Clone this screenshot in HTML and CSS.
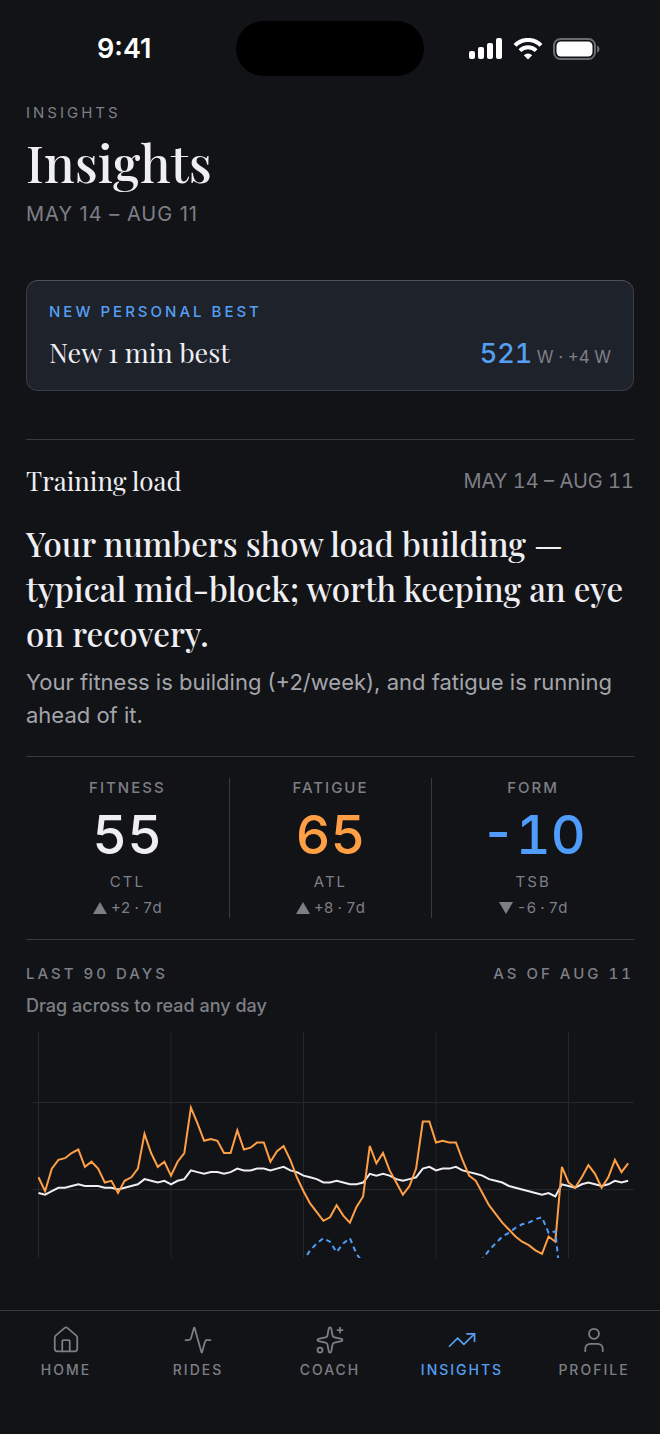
FILE: index.html
```
<!DOCTYPE html>
<html lang="en">
<head>
  <meta charset="UTF-8">
  <meta name="viewport" content="width=device-width, initial-scale=1.0">
  <title>Insights</title>
  <link rel="stylesheet" href="styles.css">
</head>
<body>
  <div class="status-bar">
    <span class="time">9:41</span>
    <span class="island"></span>
    <span class="status-icons">
      <svg width="34" height="22" viewBox="0 0 34 22" fill="#fff">
        <rect x="0" y="13" width="6" height="8" rx="2"/>
        <rect x="9" y="9" width="6" height="12" rx="2"/>
        <rect x="18" y="5" width="6" height="16" rx="2"/>
        <rect x="27" y="0" width="6" height="21" rx="2"/>
      </svg>
      <svg width="30" height="22" viewBox="0 0 30 22" fill="none" stroke="#fff" stroke-width="4">
        <path d="M2 7.3a18.4 18.4 0 0 1 26 0"/>
        <path d="M6.9 12.7a11.5 11.5 0 0 1 16.2 0"/>
        <path d="M15 21.6l-4.2-4.3a6 6 0 0 1 8.4 0z" fill="#fff" stroke="none"/>
      </svg>
      <svg width="47" height="22" viewBox="0 0 47 22">
        <rect x="1" y="1" width="41" height="20" rx="6.5" fill="none" stroke="#6b6c70" stroke-width="2"/>
        <rect x="3.5" y="3.5" width="36" height="15" rx="4.5" fill="#fff"/>
        <path d="M44 7.5c3.4 1 3.4 6 0 7z" fill="#6b6c70"/>
      </svg>
    </span>
  </div>

  <main>
    <header class="page-header">
      <div class="label wide">Insights</div>
      <h1>Insights</h1>
      <div class="date-range">MAY 14 – AUG 11</div>
    </header>

    <section class="best-card">
      <div class="label wide accent">New personal best</div>
      <div class="row">
        <h2>New 1 min best</h2>
        <div class="best-value"><strong>521</strong> W · +4 W</div>
      </div>
    </section>

    <section class="training">
      <div class="row training-head">
        <h2>Training load</h2>
        <span class="period">MAY 14 – AUG 11</span>
      </div>
      <p class="headline">Your numbers show load building — typical mid-block; worth keeping an eye on recovery.</p>
      <p class="summary">Your fitness is building (+2/week), and fatigue is running ahead of it.</p>
    </section>

    <section class="stats">
      <div class="stat">
        <div class="label strong">Fitness</div>
        <div class="number">55</div>
        <div class="label">CTL</div>
        <div class="delta"><svg width="14" height="12" viewBox="0 0 14 12"><path d="M7 0l7 12H0z"/></svg>+2 · 7d</div>
      </div>
      <div class="stat">
        <div class="label strong">Fatigue</div>
        <div class="number fatigue">65</div>
        <div class="label">ATL</div>
        <div class="delta"><svg width="14" height="12" viewBox="0 0 14 12"><path d="M7 0l7 12H0z"/></svg>+8 · 7d</div>
      </div>
      <div class="stat">
        <div class="label strong">Form</div>
        <div class="number form">-10</div>
        <div class="label">TSB</div>
        <div class="delta"><svg width="14" height="12" viewBox="0 0 14 12"><path d="M0 0h14L7 12z"/></svg>-6 · 7d</div>
      </div>
    </section>

    <section class="history">
      <div class="row">
        <span class="label wide strong">Last 90 days</span>
        <span class="label wide strong">As of Aug 11</span>
      </div>
      <p class="hint">Drag across to read any day</p>
      <svg class="chart" viewBox="0 0 608 226">
        <path class="grid" d="M12.5 0v226M145 0v226M277.5 0v226M410 0v226M542.5 0v226M6 70.5h602M6 157.5h602"/>
        <polyline class="line ctl" id="ctl"/>
        <polyline class="line atl" id="atl"/>
        <polyline class="line tsb" id="tsb"/>
      </svg>
    </section>
  </main>

  <nav class="tab-bar">
    <a href="#home">
      <svg class="icon" viewBox="0 0 24 24"><path d="M15 21v-8a1 1 0 0 0-1-1h-4a1 1 0 0 0-1 1v8"/><path d="M3 10a2 2 0 0 1 .709-1.528l7-5.999a2 2 0 0 1 2.582 0l7 5.999A2 2 0 0 1 21 10v9a2 2 0 0 1-2 2H5a2 2 0 0 1-2-2z"/></svg>
      Home
    </a>
    <a href="#rides">
      <svg class="icon" viewBox="0 0 24 24"><path d="M22 12h-2.48a2 2 0 0 0-1.93 1.46l-2.35 8.36a.25.25 0 0 1-.48 0L9.24 2.18a.25.25 0 0 0-.48 0l-2.35 8.36A2 2 0 0 1 4.49 12H2"/></svg>
      Rides
    </a>
    <a href="#coach">
      <svg class="icon" viewBox="0 0 24 24"><path d="M11.017 2.814a1 1 0 0 1 1.966 0l1.051 5.558a2 2 0 0 0 1.594 1.594l5.558 1.051a1 1 0 0 1 0 1.966l-5.558 1.051a2 2 0 0 0-1.594 1.594l-1.051 5.558a1 1 0 0 1-1.966 0l-1.051-5.558a2 2 0 0 0-1.594-1.594l-5.558-1.051a1 1 0 0 1 0-1.966l5.558-1.051a2 2 0 0 0 1.594-1.594z"/><path d="M20 2v4M22 4h-4"/><circle cx="4" cy="20" r="2"/></svg>
      Coach
    </a>
    <a href="#insights" class="active">
      <svg class="icon" viewBox="0 0 24 24"><path d="M16 7h6v6"/><path d="m22 7-8.5 8.5-5-5L2 17"/></svg>
      Insights
    </a>
    <a href="#profile">
      <svg class="icon" viewBox="0 0 24 24"><path d="M19 21v-2a4 4 0 0 0-4-4H9a4 4 0 0 0-4 4v2"/><circle cx="12" cy="7" r="4"/></svg>
      Profile
    </a>
  </nav>

  <script>
    // One value per day, oldest first
    const ctl = [
      48, 47, 49, 51, 51, 52, 53, 52, 52, 52, 51, 51, 50, 51, 52, 53, 56, 55, 54, 55,
      53, 55, 56, 61, 60, 59, 60, 60, 59, 60, 62, 61, 61, 62, 62, 61, 62, 63, 61, 60,
      58, 57, 56, 54, 54, 55, 54, 53, 53, 54, 59, 58, 59, 58, 56, 55, 56, 57, 62, 63,
      61, 62, 62, 63, 61, 60, 59, 58, 56, 55, 54, 52, 51, 50, 49, 48, 47, 48, 46, 53,
      52, 51, 53, 54, 53, 52, 53, 55, 54, 55
    ];
    const atl = [
      57, 49, 62, 67, 68, 71, 73, 63, 66, 62, 54, 55, 48, 55, 57, 62, 82, 71, 63, 66,
      58, 66, 71, 97, 88, 78, 79, 78, 71, 71, 84, 73, 74, 77, 77, 66, 72, 75, 67, 57,
      49, 42, 37, 32, 34, 41, 35, 31, 40, 46, 75, 65, 71, 61, 54, 47, 52, 62, 89, 89,
      77, 78, 77, 77, 67, 58, 55, 48, 41, 36, 31, 27, 23, 20, 18, 15, 13, 23, 20, 63,
      54, 51, 57, 64, 59, 51, 57, 67, 60, 65
    ];
    const tsb = ctl.map((value, i) => value - atl[i]);

    function drawLine(id, values) {
      const points = values.map((value, i) => {
        const x = 12.5 + i * 6.625;
        const y = 157.5 - (value - 50) * 1.74;
        return x.toFixed(1) + ',' + y.toFixed(1);
      });
      document.getElementById(id).setAttribute('points', points.join(' '));
    }

    drawLine('ctl', ctl);
    drawLine('atl', atl);
    drawLine('tsb', tsb);
  </script>
</body>
</html>
```
FILE: styles.css
```
* {
  box-sizing: border-box;
}
body {
  margin: 0;
  min-height: 100vh;
  display: flex;
  flex-direction: column;
  background-color: #121317;
  color: #eeeef3;
  font-family: Inter, "Liberation Sans", sans-serif;
  font-size: 15px;
  line-height: 20px;
}
h1, h2, p {
  margin: 0;
}
h1, h2, .headline {
  font-family: "Playfair Display", "Liberation Serif", serif;
  font-weight: 500;
}
h1 {
  margin-top: 7px;
  font-size: 51px;
  line-height: 64px;
}
h2 {
  font-size: 26px;
  font-weight: 400;
  line-height: 32px;
}
.status-bar {
  display: grid;
  grid-template-columns: 1fr 188px 1fr;
  align-items: center;
  padding: 21px 0;
}
.time {
  padding-left: 97px;
  color: #fff;
  font-size: 27px;
  font-weight: 600;
}
.island {
  height: 55px;
  border-radius: 28px;
  background-color: #000;
}
.status-icons {
  display: flex;
  justify-content: flex-end;
  gap: 10px;
  padding-right: 60px;
}
main {
  padding: 6px 26px 52px;
}
.label {
  color: #7e7f85;
  letter-spacing: 2px;
  text-transform: uppercase;
  font-variant-numeric: tabular-nums;
}
.label.wide {
  letter-spacing: 3px;
}
.label.strong {
  font-weight: 500;
}
.label.accent {
  color: #559ff3;
  font-weight: 500;
}
.date-range {
  margin-top: 8px;
  color: #7e7f85;
  font-size: 20px;
  line-height: 24px;
  letter-spacing: 1px;
}
.row {
  display: flex;
  justify-content: space-between;
  align-items: baseline;
}
.best-card {
  margin-top: 54px;
  padding: 21px 22px 22px;
  border: 1px solid #3b3d45;
  border-top-color: #4f5159;
  border-radius: 12px;
  background-color: #1e222b;
}
.best-card .row {
  margin-top: 14px;
}
.best-card h2 {
  font-size: 27px;
}
.best-value {
  color: #7e7f85;
  font-size: 17px;
  font-variant-numeric: tabular-nums;
}
.best-value strong {
  color: #559ff3;
  font-size: 27px;
  font-weight: 500;
}
.training {
  margin-top: 48px;
  padding: 25px 0 24px;
  border-top: 1px solid #393b40;
}
.training-head {
  align-items: center;
}
.period {
  color: #7e7f85;
  font-size: 20px;
  font-variant-numeric: tabular-nums;
}
.headline {
  margin-top: 24px;
  font-size: 33px;
  line-height: 45px;
}
.summary {
  margin-top: 10px;
  color: #a4a5ab;
  font-size: 22px;
  line-height: 33px;
}
.stats {
  display: grid;
  grid-template-columns: repeat(3, 1fr);
  padding: 21px 0;
  border-top: 1px solid #393b40;
  border-bottom: 1px solid #393b40;
  text-align: center;
}
.stat + .stat {
  border-left: 1px solid #393b40;
}
.number {
  margin: 7px 0;
  font-size: 54px;
  font-weight: 500;
  line-height: 60px;
  font-variant-numeric: tabular-nums;
}
.number.fatigue {
  color: #ff9f45;
}
.number.form {
  color: #4f9cfa;
}
.delta {
  display: flex;
  justify-content: center;
  align-items: center;
  gap: 4px;
  margin-top: 6px;
  color: #7e7f85;
  font-variant-numeric: tabular-nums;
}
.delta svg {
  fill: #7e7f85;
}
.history {
  padding-top: 24px;
}
.hint {
  margin-top: 10px;
  color: #7e7f85;
  font-size: 18px;
  font-weight: 500;
  line-height: 24px;
}
.chart {
  display: block;
  width: 100%;
  margin-top: 14px;
  overflow: hidden;
}
.grid {
  fill: none;
  stroke: #25272b;
}
.line {
  fill: none;
  stroke-width: 2;
}
.ctl {
  stroke: #eeeef3;
}
.atl {
  stroke: #ff9f45;
}
.tsb {
  stroke: #4f9cfa;
  stroke-dasharray: 5 4;
}
.tab-bar {
  display: grid;
  grid-template-columns: repeat(5, 1fr);
  margin-top: auto;
  padding: 14px 0 54px;
  border-top: 1px solid #393b40;
}
.tab-bar a {
  display: flex;
  flex-direction: column;
  align-items: center;
  gap: 5px;
  color: #7e7f85;
  font-size: 14px;
  font-weight: 500;
  letter-spacing: 2px;
  text-decoration: none;
  text-transform: uppercase;
}
.tab-bar a.active {
  color: #559ff3;
}
.icon {
  width: 30px;
  height: 30px;
  fill: none;
  stroke: currentColor;
  stroke-width: 1.4;
  stroke-linecap: round;
  stroke-linejoin: round;
}
```
